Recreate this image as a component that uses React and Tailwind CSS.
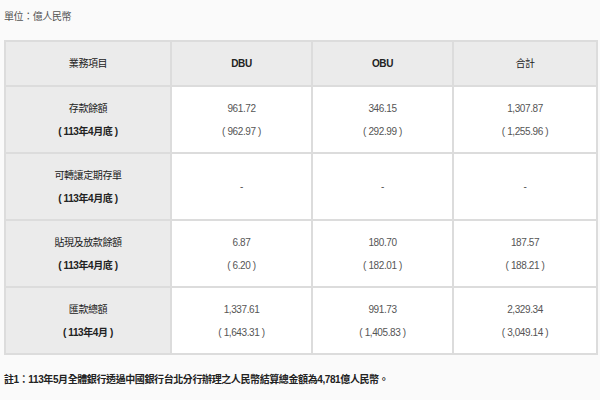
const font = { fontFamily: '"Liberation Sans", "Noto Sans CJK TC", sans-serif' }

const rows = [
  { name: '存款餘額', period: '( 113年4月底 )', values: [['961.72', '( 962.97 )'], ['346.15', '( 292.99 )'], ['1,307.87', '( 1,255.96 )']] },
  { name: '可轉讓定期存單', period: '( 113年4月底 )', values: [['-'], ['-'], ['-']] },
  { name: '貼現及放款餘額', period: '( 113年4月底 )', values: [['6.87', '( 6.20 )'], ['180.70', '( 182.01 )'], ['187.57', '( 188.21 )']] },
  { name: '匯款總額', period: '( 113年4月 )', values: [['1,337.61', '( 1,643.31 )'], ['991.73', '( 1,405.83 )'], ['2,329.34', '( 3,049.14 )']] },
]

const cell = 'border-2 border-[#dcdcdc] text-center align-middle'

export default function App() {
  return (
    <div className="h-[400px] w-[600px] overflow-hidden bg-[#fafafa] px-1 text-[10px] tracking-[-0.4px] text-[#333]" style={font}>
      <p className="h-[40px] pt-[10px] leading-[14px] text-[#555]">單位：億人民幣</p>
      <table className="w-[592px] table-fixed border-collapse">
        <colgroup>
          <col className="w-[166px]" />
          <col className="w-[141px]" />
          <col className="w-[141px]" />
          <col className="w-[144px]" />
        </colgroup>
        <thead>
          <tr className="h-[45px] bg-[#ebebeb] text-[#222]">
            <th className={`${cell} font-normal`}>業務項目</th>
            <th className={`${cell} font-semibold`}>DBU</th>
            <th className={`${cell} font-semibold`}>OBU</th>
            <th className={`${cell} font-normal`}>合計</th>
          </tr>
        </thead>
        <tbody>
          {rows.map((row) => (
            <tr key={row.name} className="h-[67px]">
              <td className={`${cell} bg-[#ebebeb] text-[#222]`}>
                <div className="leading-[23px]">{row.name}</div>
                <div className="font-bold leading-[23px]">{row.period}</div>
              </td>
              {row.values.map((lines, i) => (
                <td key={i} className={`${cell} bg-white text-[#555]`}>
                  {lines.map((line) => (
                    <div key={line} className="leading-[23px]">{line}</div>
                  ))}
                </td>
              ))}
            </tr>
          ))}
        </tbody>
      </table>
      <p className="mt-[18px] font-bold leading-[14px] text-[#222]">註1：113年5月全體銀行透過中國銀行台北分行辦理之人民幣結算總金額為4,781億人民幣。</p>
    </div>
  )
}
